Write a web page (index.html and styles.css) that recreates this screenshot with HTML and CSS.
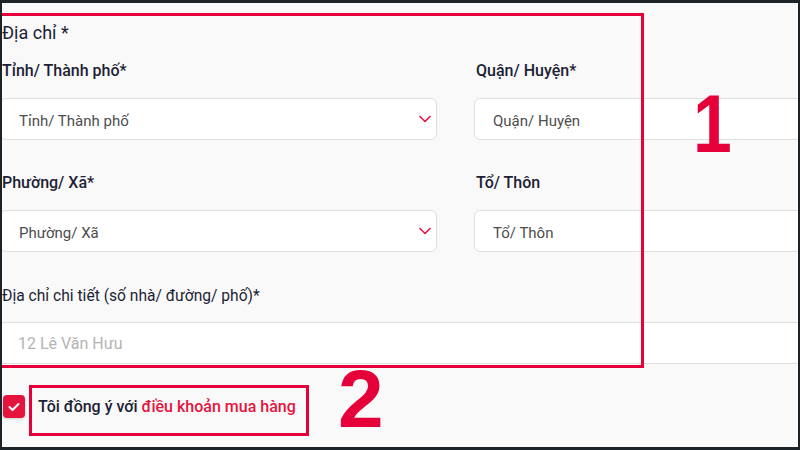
FILE: index.html
```html
<!DOCTYPE html>
<html lang="vi">
<head>
<meta charset="utf-8">
<title>Địa chỉ</title>
<link rel="stylesheet" href="styles.css">
</head>
<body>
<div class="screen">
  <div class="form">
    <h2 class="title">Địa chỉ *</h2>
    <div class="grid">
      <div class="field">
        <div class="label">Tỉnh/ Thành phố*</div>
        <div class="control select">
          <span class="value">Tỉnh/ Thành phố</span>
          <svg class="chev" width="12" height="8" viewBox="0 0 12 8"><polyline points="1,1.5 6,6.5 11,1.5" fill="none" stroke="#e5143f" stroke-width="1.6" stroke-linecap="round" stroke-linejoin="round"/></svg>
        </div>
      </div>
      <div class="field">
        <div class="label">Quận/ Huyện*</div>
        <div class="control input"><span class="value">Quận/ Huyện</span></div>
      </div>
      <div class="field">
        <div class="label">Phường/ Xã*</div>
        <div class="control select">
          <span class="value">Phường/ Xã</span>
          <svg class="chev" width="12" height="8" viewBox="0 0 12 8"><polyline points="1,1.5 6,6.5 11,1.5" fill="none" stroke="#e5143f" stroke-width="1.6" stroke-linecap="round" stroke-linejoin="round"/></svg>
        </div>
      </div>
      <div class="field">
        <div class="label">Tổ/ Thôn</div>
        <div class="control input"><span class="value">Tổ/ Thôn</span></div>
      </div>
      <div class="field wide">
        <div class="label">Địa chỉ chi tiết (số nhà/ đường/ phố)*</div>
        <div class="control input detail"><span class="placeholder">12 Lê Văn Hưu</span></div>
      </div>
    </div>
    <div class="agree">
      <span class="checkbox">
        <svg width="12" height="10" viewBox="0 0 12 10"><polyline points="1.5,5 4.5,8 10.5,2" fill="none" stroke="#fff" stroke-width="2" stroke-linecap="round" stroke-linejoin="round"/></svg>
      </span>
      <span class="agree-text">Tôi đồng ý với <span class="link">điều khoản mua hàng</span></span>
    </div>
  </div>

  <div class="mark mark-box1"></div>
  <div class="mark mark-box2"></div>
  <div class="num num1">1</div>
  <div class="num num2">2</div>
</div>
</body>
</html>
```

FILE: styles.css
```css
html, body {
  margin: 0;
  padding: 0;
  background: #1b2228;
  width: 800px;
  height: 450px;
  overflow: hidden;
}

.screen {
  position: relative;
  margin: 3px 2px 3px 2px;
  height: 444px;
  background: #f9f9f9;
  overflow: hidden;
  font-family: Roboto, "Noto Sans", sans-serif;
  color: #1d1f35;
}

.form {
  width: 912px;
  margin-left: -2px;
  padding-top: 18px;
}

.title {
  margin: 0 0 15px 0;
  padding-left: 2px;
  font-size: 18px;
  line-height: 24px;
  font-weight: 400;
}

.grid {
  display: grid;
  grid-template-columns: 437px 438px;
  column-gap: 37px;
  row-gap: 32px;
}

.field.wide {
  grid-column: 1 / -1;
  margin-top: 1px;
}

.label {
  padding-left: 2px;
  font-size: 16px;
  line-height: 22px;
  font-weight: 500;
  margin-bottom: 16px;
}

.field.wide .label {
  margin-bottom: 15px;
  font-weight: 400;
  font-size: 15.6px;
}

.control {
  box-sizing: border-box;
  height: 42px;
  background: #fff;
  border: 1px solid #dedede;
  border-radius: 6px;
  display: flex;
  align-items: center;
  padding: 0 5px 0 18px;
}

.select {
  justify-content: space-between;
}

.value {
  font-size: 15px;
  color: #4d4d4d;
  padding-top: 3px;
}

.chev {
  display: block;
}

.input.detail {
  padding-left: 17px;
  border-radius: 4px;
}

.placeholder {
  font-size: 16px;
  color: #b4b4b4;
  padding-top: 1px;
}

.agree {
  display: flex;
  align-items: center;
  gap: 13px;
  margin-top: 31px;
  padding-left: 3px;
  height: 23px;
}

.checkbox {
  width: 22px;
  height: 23px;
  border-radius: 4px;
  background: #e5143f;
  display: flex;
  align-items: center;
  justify-content: center;
  box-shadow: 0 1px 3px rgba(0, 0, 0, 0.18);
}

.checkbox svg {
  display: block;
}

.agree-text {
  font-size: 16px;
  font-weight: 500;
  color: #1d1f35;
}

.link {
  color: #e5143f;
}

.mark {
  position: absolute;
  box-sizing: border-box;
  border: 3px solid #e6003a;
}

.mark-box1 {
  left: -10px;
  top: 10px;
  width: 652px;
  height: 355px;
}

.mark-box2 {
  left: 27px;
  top: 382px;
  width: 280px;
  height: 51px;
}

.num {
  position: absolute;
  font-family: "Liberation Sans", Arial, sans-serif;
  font-weight: 700;
  font-size: 82px;
  line-height: 82px;
  color: #e6003a;
}

.num1 {
  left: 691px;
  top: 80px;
  transform: scaleX(0.85);
  transform-origin: left top;
}

.num2 {
  left: 336px;
  top: 355px;
}
```
